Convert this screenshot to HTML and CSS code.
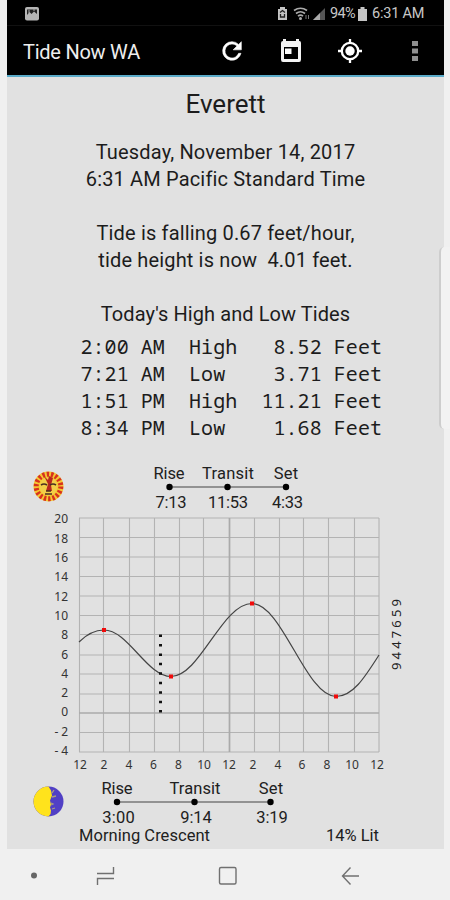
FILE: index.html
```html
<!DOCTYPE html>
<html lang="en">
<head>
<meta charset="utf-8">
<title>Tide Now WA</title>
<link rel="stylesheet" href="styles.css">
</head>
<body>
<div class="phone">
  <header class="status">
    <svg class="photo" width="14" height="14" viewBox="0 0 14 14"><rect width="14" height="13.5" rx="2" fill="#b5b5b5"/><path d="M2 8V2.500H12V7L9 4.500 6.500 7 4.500 5Z" fill="#222"/><path d="M4 3v3M8 3h2" stroke="#aaa"/></svg>
    <div class="status-right">
      <svg width="48" height="16" viewBox="0 0 48 16"><path d="M1 3h2V1h5v2h2v11H1z" fill="#c4c4c4"/><path d="M3 6.500l2.500-2 2.500 2M3.500 11h4M3.500 8v3h4V8" fill="none" stroke="#222" stroke-width="1.300"/><g fill="none" stroke="#aaa" stroke-width="1.700"><path d="M17 4.500q6.500-4.500 13 0M19 7.500q4.500-3.500 9 0M21 10.200q2.500-2 5 0"/></g><circle cx="23.500" cy="12.500" r="1.500" fill="#aaa"/><path d="M29 9v4M31.500 9v4" stroke="#777"/><path d="M36 14H48V2z" fill="#555"/><path d="M36 14h7V7z" fill="#aaa"/></svg>
      <span class="pct">94%</span>
      <svg class="batt" width="9" height="14" viewBox="0 0 9 14"><path d="M0 2h2.500V0h4v2H9v12H0z" fill="#c4c4c4"/></svg>
      <span class="clock">6:31 AM</span>
    </div>
  </header>
  <nav class="appbar">
    <h1>Tide Now WA</h1>
    <svg class="act" width="28" height="28" viewBox="0 0 24 24"><path fill="#fff" stroke="#fff" stroke-width=".5" d="M17.650 6.350A7.958 7.958 0 0 0 12 4a8 8 0 1 0 7.730 10h-2.080A6 6 0 1 1 12 6c1.660 0 3.140.690 4.220 1.780L13 11h7V4l-2.350 2.350z"/></svg>
    <svg class="act" width="28" height="28" viewBox="0 0 28 28"><path fill="#f4f4f4" fill-rule="evenodd" d="M6 4V2h3v2h10V2h3v2h.500Q24 4 24 6V22.500Q24 25 22 25H6Q4 25 4 22.500V6Q4 4 6 4ZM7 10V22H21V10Z"/><path fill="#fff" d="M8 11.500h6.500v5.500H8z"/></svg>
    <svg class="act" width="28" height="28" viewBox="0 0 28 28"><circle cx="14" cy="14" r="8.200" fill="none" stroke="#fff" stroke-width="2.300"/><circle cx="14" cy="14" r="4.700" fill="#fff"/><path d="M14 2v4M14 22v4M2 14h4M22 14h4" stroke="#fff" stroke-width="2.300"/></svg>
    <svg class="more" width="8" height="24" viewBox="0 0 8 24"><path fill="#8f8f8f" d="M1 2h6v5H1zM1 9.500h6v5H1zM1 17h6v5H1z"/></svg>
  </nav>
  <main>
    <h2>Everett</h2>
    <p class="date">Tuesday, November 14, 2017</p>
    <p class="time">6:31 AM Pacific Standard Time</p>
    <p class="falling">Tide is falling 0.67 feet/hour,</p>
    <p class="height">tide height is now&nbsp; 4.01 feet.</p>
    <p class="today">Today's High and Low Tides</p>
<pre class="tides">2:00 AM  High   8.52 Feet
7:21 AM  Low    3.71 Feet
1:51 PM  High  11.21 Feet
8:34 PM  Low    1.68 Feet</pre>
    <svg class="ephemeris sun" width="437" height="54" viewBox="7 459 437 54">
      <circle cx="48.500" cy="486.500" r="15" fill="#f5c832"/>
      <circle cx="48.500" cy="486.500" r="12.300" fill="none" stroke="#d7321e" stroke-width="5" stroke-dasharray="2.400 1.893"/>
      <circle cx="48.500" cy="486.500" r="9" fill="#f2cf48"/>
      <path d="M44 476l4 4 1-4 4 2-2 7 1 6h-6l2-7z" fill="#b8281f"/>
      <path d="M41 485q3-2 6 0M50 485q3-2 6 0M46 491h5M45 494h7" fill="none" stroke="#4b3020" stroke-width="1.700"/>
      <path d="M169 487H286" stroke="#777" stroke-width="1.700"/>
      <g><circle cx="169.500" cy="487" r="3.200"/><circle cx="227.500" cy="487" r="3.200"/><circle cx="286" cy="487" r="3.200"/></g>
      <g class="label"><text x="169" y="479" textLength="31">Rise</text><text x="228" y="479" textLength="52">Transit</text><text x="286" y="479" textLength="24.500">Set</text><text x="171" y="507.500" textLength="31">7:13</text><text x="228" y="507.500" textLength="40">11:53</text><text x="287.500" y="507.500" textLength="31">4:33</text></g>
    </svg>
    <svg class="chart" width="437" height="262" viewBox="7 513 437 262">
      <path d="M79.500 518V752M103.500 518V752M129.500 518V752M154.500 518V752M179.500 518V752M203.500 518V752M254.500 518V752M279.500 518V752M303.500 518V752M328.500 518V752M354.500 518V752M379 518V752M79 518H379M79 537.500H379M79 557H379M79 576.500H379M79 596H379M79 615.500H379M79 634.500H379M79 655H379M79 674H379M79 694H379M79 732.500H379M79 752H379" fill="none" stroke="#b3b3b3" stroke-width="1.100"/>
      <path d="M229.500 518V752M79 713H379" stroke="#aaa" stroke-width="1.700"/>
      <path d="M79 642C87 634 95 630 104 630C128 630 147 676.500 171 676.500C200 676.500 222 603.500 252 603.500C282 603.500 306 696.500 336 696.500C353 696.500 365 677 379 655" fill="none" stroke="#444" stroke-width="1.200"/>
      <path d="M160.500 634.500V714" stroke="#111" stroke-width="3" stroke-dasharray="2.500 6.950"/>
      <path d="M102 628h4v4h-4zM169 674.500h4v4h-4zM250 601.500h4v4h-4zM334 694.500h4v4h-4z" fill="#f00b0b"/>
      <g class="yaxis"><text x="68" y="523">20</text><text x="68" y="542.500">18</text><text x="68" y="562">16</text><text x="68" y="581">14</text><text x="68" y="600.500">12</text><text x="68" y="619.500">10</text><text x="68" y="639">8</text><text x="68" y="658.500">6</text><text x="68" y="677.500">4</text><text x="68" y="697">2</text><text x="68" y="716">0</text><text x="68" y="735.500" textLength="13.500">-2</text><text x="68" y="755" textLength="13.500">-4</text></g>
      <g class="xaxis"><text x="80" y="769">12</text><text x="104" y="769">2</text><text x="129" y="769">4</text><text x="153.500" y="769">6</text><text x="178.500" y="769">8</text><text x="204" y="769">10</text><text x="229" y="769">12</text><text x="253" y="769">2</text><text x="278" y="769">4</text><text x="302" y="769">6</text><text x="327" y="769">8</text><text x="352" y="769">10</text><text x="377" y="769">12</text></g>
      <text class="station" transform="translate(401 670) rotate(-90)" textLength="71">9447659</text>
    </svg>
    <svg class="ephemeris moon" width="437" height="74" viewBox="7 775 437 74">
      <circle cx="48.500" cy="801.500" r="15" fill="#5140c5"/>
      <path d="M48.500 786.500a15 15 0 0 0 0 30q3-3 2.500-6l-1-3 1-3-1-4 2-5-1-5z" fill="#ffe31c"/>
      <path d="M52 797l4-1M51 803l2 1-2 1M52 809l3-1M54 790l-2 3" stroke="#aaa080" stroke-width="1.300" fill="none"/>
      <path d="M117 802H270" stroke="#777" stroke-width="1.700"/>
      <circle cx="117" cy="802" r="3.200"/><circle cx="194.500" cy="802" r="3.200"/><circle cx="270.500" cy="802" r="3.200"/>
      <g class="label"><text x="117" y="794" textLength="31">Rise</text><text x="195" y="794" textLength="51">Transit</text><text x="271" y="794" textLength="24.500">Set</text><text x="118.500" y="822.500" textLength="32.500">3:00</text><text x="196" y="822.500" textLength="31.500">9:14</text><text x="272" y="822.500" textLength="31.500">3:19</text><text x="144.500" y="840.500" textLength="131">Morning Crescent</text><text x="352.500" y="840.500" textLength="53">14% Lit</text></g>
    </svg>
  </main>
  <footer>
    <svg width="450" height="51" viewBox="0 849 450 51" fill="none" stroke="#707070" stroke-width="1.400"><circle cx="34" cy="875.500" r="3" fill="#666" stroke="none"/><path d="M97 873.500H113.500V867M114 878.500H97.500V885"/><rect x="219.500" y="867.500" width="16.500" height="16.500" rx="1.500"/><path d="M359 876H342.500M350.500 867.500L342.500 876l8 8.500"/></svg>
  </footer>
  <div class="edge"></div>
</div>
</body>
</html>
```
FILE: styles.css
```css
* { box-sizing: border-box; }
body { margin: 0; background: #f0f0f0; font-family: Roboto, sans-serif; color: #1c1c1c; }
.phone { position: relative; width: 450px; height: 900px; overflow: hidden; display: flex; flex-direction: column; }
.status, .appbar, main { margin: 0 6px 0 7px; }
.status { height: 26px; flex: none; background: #000; border-bottom: 1px solid #111; display: flex; align-items: center; padding: 2px 20px 0 18px; justify-content: space-between; }
.status-right { display: flex; align-items: center; color: #c8c8c8; font-size: 14.5px; line-height: 20px; white-space: nowrap; }
.pct { margin-left: 5px; width: 26px; letter-spacing: -0.7px; }
.batt { margin-left: 2px; }
.clock { margin-left: 5px; width: 52px; letter-spacing: -0.2px; }
.appbar { height: 51px; flex: none; background: #000; border-bottom: 2px solid #5aabc9; display: flex; align-items: center; padding: 0 25px 0 16px; }
h1 { flex: 1; margin: 2px 0 0; color: #eee; font-size: 20px; font-weight: 400; line-height: 28px; letter-spacing: -0.25px; }
.act { margin-right: 31px; }
.more { margin-left: 16px; }
main { height: 772px; flex: none; background: #e1e1e1; text-align: center; }
h2 { margin: 0; padding-top: 10px; height: 62px; font-size: 26px; line-height: 34px; font-weight: 400; }
p { margin: 0; height: 27px; font-size: 20px; line-height: 27px; white-space: nowrap; letter-spacing: 0.16px; }
.time { margin-bottom: 27px; }
.height { margin-bottom: 27px; }
.today { height: 32px; letter-spacing: 0.08px; }
.tides { margin: 0 0 18px 73.5px; height: 108px; font: 20px/27px "Noto Sans Mono", "DejaVu Sans Mono", monospace; letter-spacing: 0.06px; text-align: left; }
svg { display: block; flex: none; overflow: visible; }
svg text { fill: #202020; text-anchor: middle; }
.label { font-size: 16.5px; }
.yaxis text, .xaxis text { font: 12px "Noto Sans", sans-serif; fill: #333; }
.yaxis text { text-anchor: end; }
svg .station { font: 13px "Noto Sans", sans-serif; text-anchor: start; }
footer { height: 51px; flex: none; }
.edge { position: absolute; right: 0; top: 247px; width: 11px; height: 182px; background: #f2f2f2; border-left: 2px solid #cdcdcd; border-radius: 5px 0 0 5px; }
```
